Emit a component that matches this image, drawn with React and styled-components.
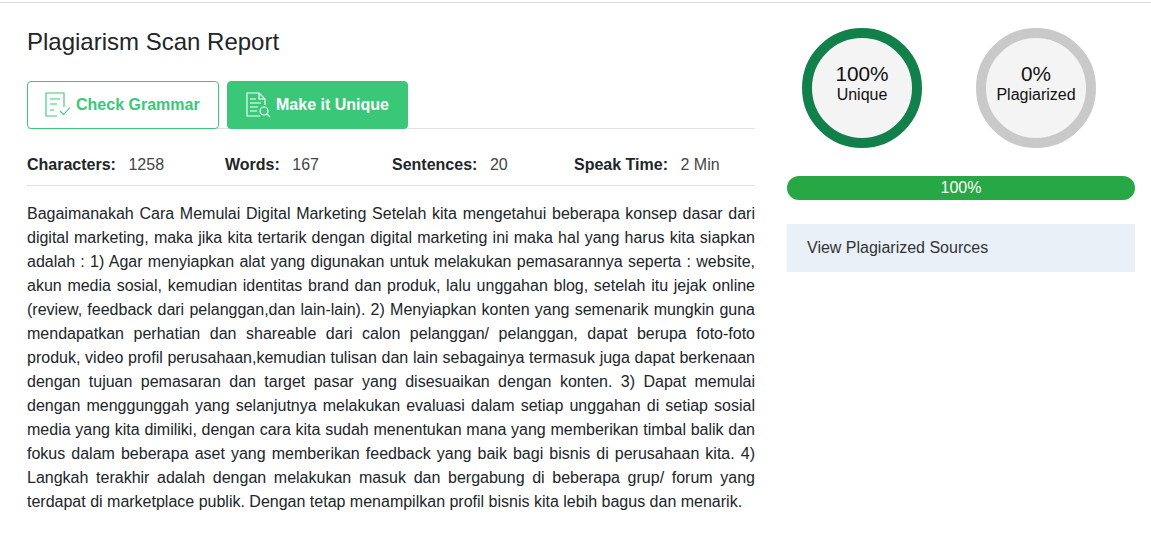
import React from "react";
import styled, { createGlobalStyle } from "styled-components";

const GlobalStyle = createGlobalStyle`
  html, body {
    margin: 0;
    padding: 0;
    background: #fff;
    font-family: "Liberation Sans", Arial, sans-serif;
    color: #212529;
  }
`;

const Page = styled.div`
  width: 1151px;
  height: 534px;
  box-sizing: border-box;
  border-top: 1px solid #dcdcdc;
  margin-top: 2px;
  padding: 24px 16px 0 27px;
  display: flex;
  gap: 32px;
  overflow: hidden;
`;

const Report = styled.div`
  width: 728px;
  flex-shrink: 0;
`;

const Title = styled.h1`
  margin: 0 0 25px;
  font-size: 24px;
  line-height: 29px;
  font-weight: 400;
`;

const Actions = styled.div`
  box-sizing: border-box;
  display: flex;
  gap: 8px;
  border-bottom: 1px solid #dee2e6;
  height: 48px;
`;

const Action = styled.button`
  box-sizing: border-box;
  width: ${(p) => p.$width}px;
  height: 48px;
  flex-shrink: 0;
  padding: 0 0 0 ${(p) => p.$pad}px;
  display: flex;
  align-items: center;
  gap: ${(p) => p.$gap}px;
  border: 1px solid #3ac878;
  border-radius: 4px;
  background: ${(p) => (p.$filled ? "#3ac878" : "#fff")};
  color: ${(p) => (p.$filled ? "#fff" : "#3ac878")};
  font-family: inherit;
  font-size: 16px;
  font-weight: 700;
`;

const Stats = styled.div`
  box-sizing: border-box;
  display: grid;
  grid-template-columns: 198px 167px 182px 1fr;
  height: 57px;
  padding-top: 15px;
  align-items: center;
  border-bottom: 1px solid #dee2e6;
  font-size: 16px;
`;

const Stat = styled.div`
  display: flex;
  gap: 12.5px;
  color: #444;
  b {
    color: #212529;
  }
`;

const Body = styled.p`
  margin: 16px 0 0;
  font-size: 16px;
  line-height: 24px;
  text-align: justify;
`;

const Side = styled.div`
  width: 348px;
  flex-shrink: 0;
  padding-top: 1px;
`;

const Circles = styled.div`
  display: flex;
  gap: 54px;
  padding-left: 15px;
`;

const Circle = styled.div`
  box-sizing: border-box;
  width: 120px;
  height: 120px;
  padding-bottom: 8px;
  border-radius: 50%;
  border: 10px solid ${(p) => p.$color};
  background: #f4f4f4;
  display: flex;
  flex-direction: column;
  align-items: center;
  justify-content: center;
  color: #111;
`;

const Percent = styled.div`
  font-size: 20.8px;
  line-height: 22px;
`;

const Label = styled.div`
  font-size: 16px;
  line-height: 20px;
`;

const Bar = styled.div`
  margin-top: 28px;
  height: 24px;
  border-radius: 12px;
  background: #28a745;
  color: #fff;
  font-size: 16px;
  line-height: 24px;
  text-align: center;
`;

const Sources = styled.div`
  margin-top: 24px;
  height: 48px;
  padding-left: 20px;
  display: flex;
  align-items: center;
  background: #e9f0f8;
  font-size: 16px;
  color: #333;
`;

const GrammarIcon = () => (
  <svg width="26" height="26" viewBox="0 0 26 26" fill="none" stroke="currentColor" strokeWidth="1.1">
    <path d="M19 15V1H1v23h11" />
    <path d="M5 7h10M5 12h7M5 18h4" />
    <path d="M15 19l3.5 3.5L25 15.5" />
  </svg>
);

const ScanIcon = () => (
  <svg width="25" height="26" viewBox="0 0 25 26" fill="none" stroke="currentColor" strokeWidth="1.1">
    <path d="M13 1H1v23h13" />
    <path d="M13 1l6 6v6M13 1v6h6" />
    <path d="M4 7h6M4 11h11M4 15h8M4 19h7" />
    <circle cx="18" cy="19" r="4" />
    <path d="M21 22l3 3" />
  </svg>
);

export default function App() {
  return (
    <>
      <GlobalStyle />
      <Page>
        <Report>
          <Title>Plagiarism Scan Report</Title>
          <Actions>
            <Action $width={192} $pad={17} $gap={5}>
              <GrammarIcon />
              Check Grammar
            </Action>
            <Action $width={181} $pad={18} $gap={5} $filled>
              <ScanIcon />
              Make it Unique
            </Action>
          </Actions>
          <Stats>
            <Stat><b>Characters:</b> 1258</Stat>
            <Stat><b>Words:</b> 167</Stat>
            <Stat><b>Sentences:</b> 20</Stat>
            <Stat><b>Speak Time:</b> 2 Min</Stat>
          </Stats>
          <Body>
            Bagaimanakah Cara Memulai Digital Marketing Setelah kita mengetahui beberapa konsep dasar dari digital marketing, maka jika kita tertarik dengan digital marketing ini maka hal yang harus kita siapkan adalah : 1) Agar menyiapkan alat yang digunakan untuk melakukan pemasarannya seperta : website, akun media sosial, kemudian identitas brand dan produk, lalu unggahan blog, setelah itu jejak online (review, feedback dari pelanggan,dan lain-lain). 2) Menyiapkan konten yang semenarik mungkin guna mendapatkan perhatian dan shareable dari calon pelanggan/ pelanggan, dapat berupa foto-foto produk, video profil perusahaan,kemudian tulisan dan lain sebagainya termasuk juga dapat berkenaan dengan tujuan pemasaran dan target pasar yang disesuaikan dengan konten. 3) Dapat memulai dengan menggunggah yang selanjutnya melakukan evaluasi dalam setiap unggahan di setiap sosial media yang kita dimiliki, dengan cara kita sudah menentukan mana yang memberikan timbal balik dan fokus dalam beberapa aset yang memberikan feedback yang baik bagi bisnis di perusahaan kita. 4) Langkah terakhir adalah dengan melakukan masuk dan bergabung di beberapa grup/ forum yang terdapat di marketplace publik. Dengan tetap menampilkan profil bisnis kita lebih bagus dan menarik.
          </Body>
        </Report>
        <Side>
          <Circles>
            <Circle $color="#11804b">
              <Percent>100%</Percent>
              <Label>Unique</Label>
            </Circle>
            <Circle $color="#c9c9c9">
              <Percent>0%</Percent>
              <Label>Plagiarized</Label>
            </Circle>
          </Circles>
          <Bar>100%</Bar>
          <Sources>View Plagiarized Sources</Sources>
        </Side>
      </Page>
    </>
  );
}
